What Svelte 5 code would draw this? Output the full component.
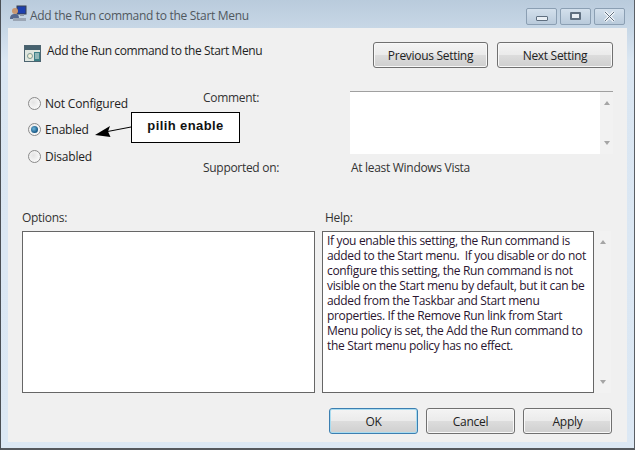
<script>
  let state = "Enabled";
  const choices = ["Not Configured", "Enabled", "Disabled"];
  const helpLines = [
    "If you enable this setting, the Run command is",
    "added to the Start menu.  If you disable or do not",
    "configure this setting, the Run command is not",
    "visible on the Start menu by default, but it can be",
    "added from the Taskbar and Start menu",
    "properties. If the Remove Run link from Start",
    "Menu policy is set, the Add the Run command to",
    "the Start menu policy has no effect."
  ];
</script>

<div class="window">
  <div class="titlebar">
    <svg class="appicon" width="17" height="17" viewBox="0 0 17 17">
      <rect x="7" y="1" width="9" height="8" fill="#1c3fae" stroke="#39404d"/>
      <rect x="10" y="9" width="4" height="2" fill="#8b95a3"/>
      <circle cx="5" cy="6" r="3" fill="#c9966f"/>
      <path d="M0 14c0-4 2-5 5-5s4 1 4 5z" fill="#56688f"/>
      <rect x="3" y="13" width="13" height="3" fill="#9aa5b4"/>
    </svg>
    <span class="wintitle">Add the Run command to the Start Menu</span>
    <div class="caption">
      <span class="capbtn"><i class="min"></i></span>
      <span class="capbtn"><i class="max"></i></span>
      <span class="capbtn close">
        <svg width="13" height="11" viewBox="0 0 13 11"><path d="M2 1l9 9M11 1l-9 9" stroke="#f4f7fa" stroke-width="3"/><path d="M2 1l9 9M11 1l-9 9" stroke="#5f6f80" stroke-width="1" fill="none"/></svg>
      </span>
    </div>
  </div>

  <div class="client">
    <header class="head">
      <svg class="policy" width="17" height="17" viewBox="0 0 17 17">
        <rect x="0.5" y="0.5" width="16" height="16" fill="#dfe6df" stroke="#4c6470"/>
        <rect x="1" y="1" width="15" height="4" fill="#46616e"/>
        <circle cx="6" cy="11" r="2.5" fill="#f3f1d8" stroke="#7f9a97"/>
        <rect x="10" y="7" width="6" height="9" fill="#3d7f86"/>
        <path d="M11 9h4M11 11h4M11 13h4" stroke="#e4efe9"/>
      </svg>
      <h1>Add the Run command to the Start Menu</h1>
      <div class="navbtns">
        <button class="prev">Previous Setting</button>
        <button>Next Setting</button>
      </div>
    </header>

    <section class="settings">
      <div class="radios">
        {#each choices as c}
          <label class="radio">
            <span class="dot" class:on={state === c}></span>
            {c}
          </label>
        {/each}
        <div class="callout">pilih enable</div>
        <svg class="arrow" width="37" height="12" viewBox="0 0 37 12">
          <path d="M36 1L10 6" stroke="#000" stroke-width="1"/>
          <path d="M0 9L15 0L13 5.6L15.5 11z" fill="#000"/>
        </svg>
      </div>
      <div class="labels">
        <span>Comment:</span>
        <span>Supported on:</span>
      </div>
      <div class="values">
        <div class="comment">
          <div class="scroll"><b class="up"></b><b class="down"></b></div>
        </div>
        <p>At least Windows Vista</p>
      </div>
    </section>

    <section class="panes">
      <div class="pane">
        <span class="panelabel">Options:</span>
        <div class="box"></div>
      </div>
      <div class="pane">
        <span class="panelabel helplabel">Help:</span>
        <div class="helprow">
          <div class="box help">
            {#each helpLines as line}
              <div>{line}</div>
            {/each}
          </div>
          <div class="scroll"><b class="up"></b><b class="down"></b></div>
        </div>
      </div>
    </section>

    <footer class="actions">
      <button class="default">OK</button>
      <button>Cancel</button>
      <button>Apply</button>
    </footer>
  </div>
</div>

<style>
  :global(body) {
    margin: 0;
    background: #dfe9f3;
  }

  .window {
    width: 635px;
    height: 450px;
    box-sizing: border-box;
    padding: 0 7px 6px 7px;
    border-left: 1px solid #4a4f55;
    border-right: 1px solid #5a5f65;
    border-bottom: 2px solid #55595e;
    background: linear-gradient(to bottom, #b9cbdc 0, #c7d7e6 28px, #dae6f2 60px, #dce8f4 100%);
    font-family: "Open Sans", "Liberation Sans", sans-serif;
    font-size: 12px;
    letter-spacing: -0.3px;
    color: #222;
    overflow: hidden;
  }

  .titlebar {
    height: 28px;
    display: flex;
    align-items: center;
    margin-left: 2px;
    margin-right: -1px;
  }

  .appicon {
    margin-right: 3px;
    margin-top: -1px;
  }

  .wintitle {
    color: #50585f;
    margin-top: 2px;
    letter-spacing: -0.3px;
  }

  .caption {
    margin-left: auto;
    display: flex;
    gap: 3px;
    margin-top: 4px;
    margin-right: 3px;
  }

  .capbtn {
    width: 29px;
    height: 15px;
    border: 1px solid #8b9fb3;
    border-radius: 2px;
    background: linear-gradient(to bottom, #d3e0ec, #b9cadb);
    display: flex;
    align-items: center;
    justify-content: center;
  }

  .min {
    width: 10px;
    height: 3px;
    margin-top: 4px;
    border: 1px solid #5f6f80;
    background: #e8eef4;
    border-radius: 1px;
  }

  .max {
    box-sizing: content-box;
    width: 7px;
    height: 4px;
    border: 2px solid #5f6f80;
    border-radius: 1px;
    background: #e8eef4;
  }

  .client {
    height: 414px;
    background: #f0f0f0;
    position: relative;
  }

  .head {
    box-sizing: border-box;
    display: flex;
    align-items: flex-start;
    padding: 14px 14px 0 16px;
    height: 49px;
  }

  .policy {
    margin-top: 3px;
    margin-right: 6px;
  }

  h1 {
    margin: 0;
    font-size: 12px;
    font-weight: 400;
    line-height: 17px;
    letter-spacing: -0.4px;
    color: #1e1e1e;
  }

  .navbtns {
    margin-left: auto;
    display: flex;
    gap: 9px;
  }

  .navbtns button {
    width: 116px;
  }

  .navbtns .prev {
    width: 115px;
  }

  button {
    height: 26px;
    box-sizing: border-box;
    border: 1px solid #707070;
    border-radius: 3px;
    background: linear-gradient(to bottom, #f4f4f4 0, #ebebeb 48%, #dcdcdc 52%, #cfcfcf 100%);
    box-shadow: inset 0 0 0 1px #f8f8f8;
    font: inherit;
    letter-spacing: -0.3px;
    color: #222;
    padding: 0;
  }

  .default {
    border-color: #3c7fb1;
    box-shadow: inset 0 0 0 1px #a9dcf0;
  }

  .settings {
    display: grid;
    grid-template-columns: 195px 147px 263px;
    height: 106px;
    margin-top: 14px;
  }

  .radios {
    position: relative;
    display: flex;
    flex-direction: column;
    padding-left: 20px;
    margin-top: -1px;
  }

  .radio {
    display: flex;
    align-items: center;
    gap: 4px;
    height: 26.5px;
    color: #222;
    letter-spacing: -0.2px;
  }

  .dot {
    width: 11px;
    height: 11px;
    border-radius: 50%;
    border: 1px solid #8a8a8a;
    background: radial-gradient(circle at 40% 40%, #e4e4e4, #f8f8f8 70%);
    box-sizing: content-box;
    position: relative;
  }

  .dot.on::after {
    content: "";
    position: absolute;
    inset: 2px;
    border-radius: 50%;
    background: radial-gradient(circle at 40% 40%, #6fb7dc, #0e4f7d 75%);
  }

  .callout {
    position: absolute;
    left: 123px;
    top: 22px;
    width: 109px;
    height: 31px;
    box-sizing: border-box;
    border: 1px solid #000;
    background: #fff;
    font-family: "Liberation Sans", sans-serif;
    font-size: 13px;
    font-weight: 700;
    letter-spacing: 0.4px;
    color: #111;
    display: flex;
    align-items: center;
    justify-content: center;
    padding-bottom: 4px;
  }

  .arrow {
    position: absolute;
    left: 87px;
    top: 36px;
  }

  .labels {
    display: flex;
    flex-direction: column;
    justify-content: space-between;
    height: 87px;
    color: #333;
    margin-top: -2px;
  }

  .labels span {
    line-height: 17px;
  }

  .values {
    display: flex;
    flex-direction: column;
  }

  .comment {
    height: 63px;
    background: #fff;
    border-top: 1px solid #a0a0a0;
    box-sizing: border-box;
    display: flex;
    justify-content: flex-end;
  }

  .comment .scroll {
    width: 13px;
    height: 100%;
  }

  .values p {
    margin: 5px 0 0 1px;
    line-height: 17px;
    color: #333;
  }

  .scroll {
    width: 17px;
    background: #f2f2f2;
    position: relative;
  }

  .scroll b {
    position: absolute;
    left: 50%;
    margin-left: -3px;
    width: 0;
    height: 0;
    border-left: 3px solid transparent;
    border-right: 3px solid transparent;
  }

  .up {
    top: 9px;
    border-bottom: 4px solid #a5a5a5;
  }

  .down {
    bottom: 9px;
    border-top: 4px solid #a5a5a5;
  }

  .panes {
    display: grid;
    grid-template-columns: 293px 289px;
    column-gap: 7px;
    margin: 12px 0 0 14px;
  }

  .panelabel {
    display: block;
    height: 22px;
    line-height: 17px;
    color: #333;
  }

  .helplabel {
    padding-left: 3px;
  }

  .pane .box {
    height: 162px;
    box-sizing: border-box;
    border: 1px solid #666;
    background: #fff;
  }

  .helprow {
    display: flex;
  }

  .help {
    width: 272px;
    padding: 1px 0 0 4px;
    line-height: 15px;
    color: #2a1530;
    white-space: pre;
    letter-spacing: -0.33px;
  }

  .actions {
    display: flex;
    justify-content: flex-end;
    gap: 8px;
    padding-right: 15px;
    margin-top: 15px;
  }

  .actions button {
    width: 89px;
  }
</style>
